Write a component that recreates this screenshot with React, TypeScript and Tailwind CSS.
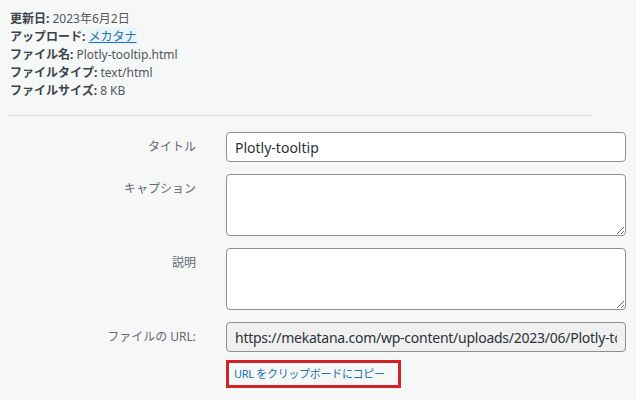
import React from "react";

// ─── Attachment details (WordPress media modal style) ───────────────────────

const jp = "font-['Segoe_UI','Noto_Sans','Noto_Sans_CJK_JP',sans-serif]";

const meta: { label: string; value: React.ReactNode }[] = [
  { label: "更新日:", value: "2023年6月2日" },
  {
    label: "アップロード:",
    value: (
      <a href="#" className="text-[#2271b1] underline bg-[#e9f4f8]">
        メカタナ
      </a>
    ),
  },
  { label: "ファイル名:", value: "Plotly-tooltip.html" },
  { label: "ファイルタイプ:", value: "text/html" },
  { label: "ファイルサイズ:", value: "8 KB" },
];

function Label({ children, top }: { children: React.ReactNode; top?: boolean }) {
  return (
    <div
      className={`w-[196px] shrink-0 text-right text-[12px] text-[#646970] ${
        top ? "pt-[6px] leading-[18px]" : "self-center leading-[18px]"
      }`}
    >
      {children}
    </div>
  );
}

export default function App() {
  return (
    <div className={`min-h-[400px] w-[636px] bg-[#f6f7f7] ${jp}`}>
      {/* Meta info */}
      <div className="px-[10px] pt-[10px] text-[12px] leading-[18px] text-[#50575e]">
        {meta.map((m) => (
          <div key={m.label}>
            <span className="font-bold text-[#3c434a]">{m.label}</span> {m.value}
          </div>
        ))}
      </div>

      <hr className="mx-[8px] mt-[15px] w-[584px] border-0 border-t border-[#dcdcde]" />

      {/* Fields */}
      <div className="mt-[16px] flex flex-col gap-[12px] pr-[10px]">
        <div className="flex gap-[30px]">
          <Label>タイトル</Label>
          <input
            defaultValue="Plotly-tooltip"
            className="h-[30px] w-[400px] rounded-[4px] border border-[#8c8f94] bg-white px-[8px] text-[14px] text-[#2c3338] outline-none"
          />
        </div>
        <div className="flex gap-[30px]">
          <Label top>キャプション</Label>
          <textarea className="block h-[62px] w-[400px] rounded-[4px] border border-[#8c8f94] bg-white px-[8px] text-[14px] outline-none" />
        </div>
        <div className="flex gap-[30px]">
          <Label top>説明</Label>
          <textarea className="block h-[62px] w-[400px] rounded-[4px] border border-[#8c8f94] bg-white px-[8px] text-[14px] outline-none" />
        </div>
        <div className="flex gap-[30px]">
          <Label>ファイルの URL:</Label>
          <input
            readOnly
            defaultValue="https://mekatana.com/wp-content/uploads/2023/06/Plotly-tooltip.html"
            className="h-[30px] w-[400px] rounded-[4px] border border-[#8c8f94] bg-[#f0f0f1] px-[8px] text-[14px] tracking-[-0.25px] text-[#2c3338] outline-none"
          />
        </div>
        <div className="flex gap-[30px]">
          <div className="w-[196px] shrink-0" />
          <div className="-mt-[4px] flex h-[28px] w-[175px] items-center whitespace-nowrap border-[3px] border-[#d3222a] pl-[5px] text-[11px] tracking-[-0.3px] text-[#2271b1]">
            URL をクリップボードにコピー
          </div>
        </div>
      </div>
    </div>
  );
}
